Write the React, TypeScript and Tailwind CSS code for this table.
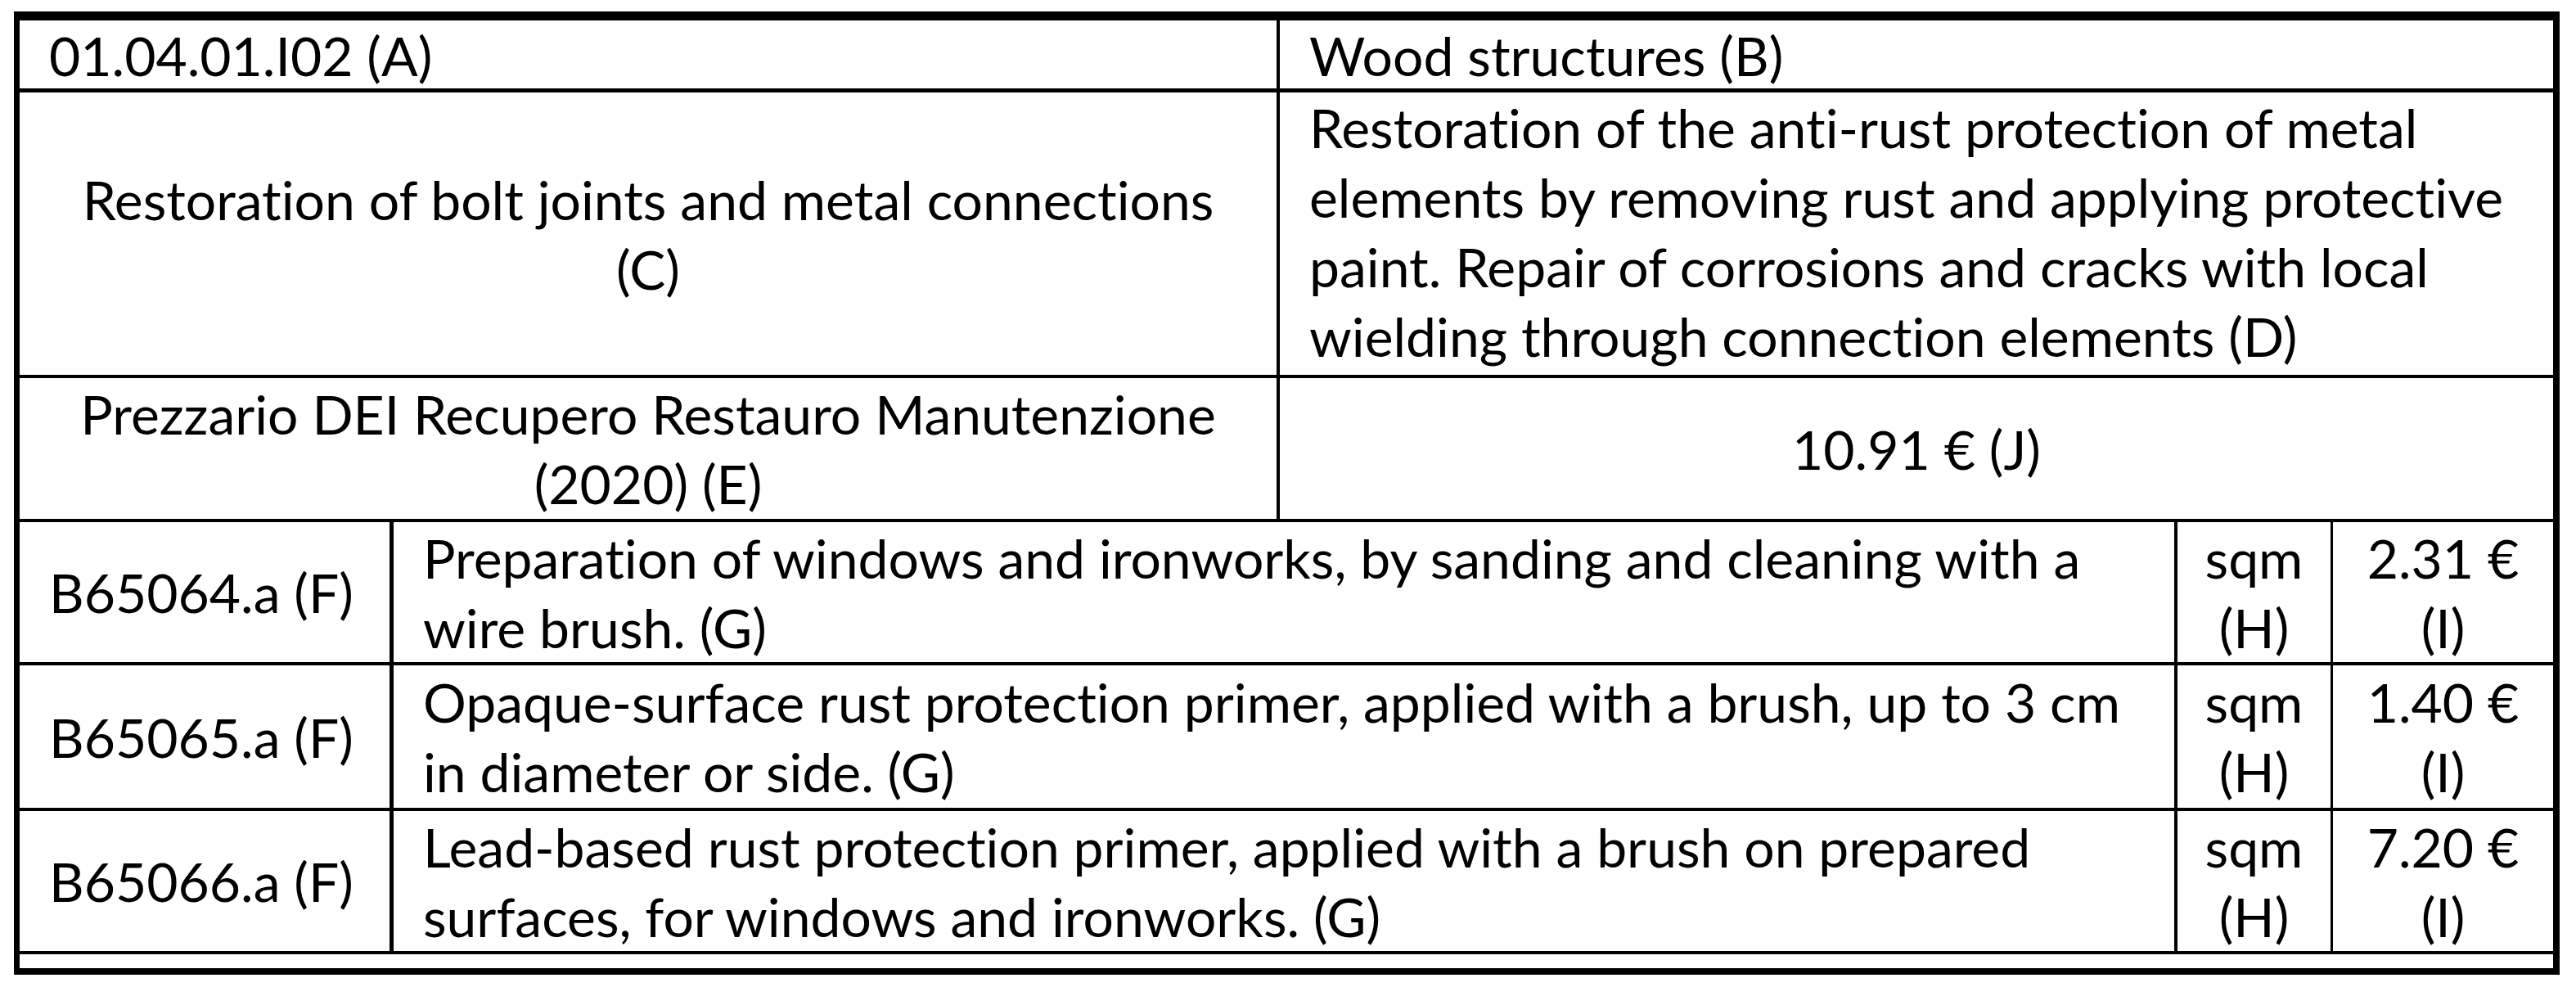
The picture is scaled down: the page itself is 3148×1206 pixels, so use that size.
const items = [
  {
    code: 'B65064.a (F)',
    desc: ['Preparation of windows and ironworks, by sanding and cleaning with a', 'wire brush. (G)'],
    price: '2.31 €',
    rowClass: 'h-[175px]',
  },
  {
    code: 'B65065.a (F)',
    desc: ['Opaque-surface rust protection primer, applied with a brush, up to 3 cm', 'in diameter or side. (G)'],
    price: '1.40 €',
    rowClass: 'h-[178px]',
  },
  {
    code: 'B65066.a (F)',
    desc: ['Lead-based rust protection primer, applied with a brush on prepared', 'surfaces, for windows and ironworks. (G)'],
    price: '7.20 €',
    rowClass: 'h-[175px]',
  },
]

const App = () => {
  return (
    <div className="min-h-[1206px] w-[3148px] bg-white pt-[14px] pl-[17px] text-black">
      <div
        className="w-[3111px] border-t-[11px] border-l-[7px] border-r-[8px] border-b-[8px] border-black text-[66px] leading-[85px] whitespace-nowrap [font-variant-ligatures:none]"
        style={{ fontFamily: 'Lato, "Open Sans", sans-serif' }}
      >
        {/* riga 1 */}
        <div className="flex h-[88px] border-b-[5px] border-black">
          <div className="w-[1540px] border-r-4 border-black pl-[36px]">01.04.01.I02 (A)</div>
          <div className="flex-1 pl-[36px]">Wood structures (B)</div>
        </div>

        {/* riga 2 */}
        <div className="flex h-[349px] border-b-4 border-black">
          <div className="flex w-[1540px] flex-col items-center justify-center border-r-4 border-black text-center">
            <span>Restoration of bolt joints and metal connections</span>
            <span>(C)</span>
          </div>
          <div className="flex flex-1 flex-col pl-[36px]">
            <span>Restoration of the anti-rust protection of metal</span>
            <span>elements by removing rust and applying protective</span>
            <span>paint. Repair of corrosions and cracks with local</span>
            <span>wielding through connection elements (D)</span>
          </div>
        </div>

        {/* riga 3 */}
        <div className="flex h-[176px] border-b-4 border-black">
          <div className="flex w-[1540px] flex-col items-center justify-center border-r-4 border-black text-center">
            <span>Prezzario DEI Recupero Restauro Manutenzione</span>
            <span>(2020) (E)</span>
          </div>
          <div className="flex flex-1 items-center justify-center">10.91 € (J)</div>
        </div>

        {/* voci */}
        {items.map((it) => (
          <div key={it.code} className={`flex border-b-4 border-black ${it.rowClass}`}>
            <div className="flex w-[457px] items-center border-r-[5px] border-black pl-[36px]">{it.code}</div>
            <div className="flex w-[2180px] flex-col justify-center border-r-4 border-black pl-[36px]">
              <span>{it.desc[0]}</span>
              <span>{it.desc[1]}</span>
            </div>
            <div className="flex w-[190px] flex-col items-center justify-center border-r-[3px] border-black">
              <span>sqm</span>
              <span>(H)</span>
            </div>
            <div className="flex flex-1 flex-col items-center justify-center">
              <span>{it.price}</span>
              <span>(I)</span>
            </div>
          </div>
        ))}

        {/* riga vuota */}
        <div className="h-[17px]" />
      </div>
    </div>
  )
}

export default App
